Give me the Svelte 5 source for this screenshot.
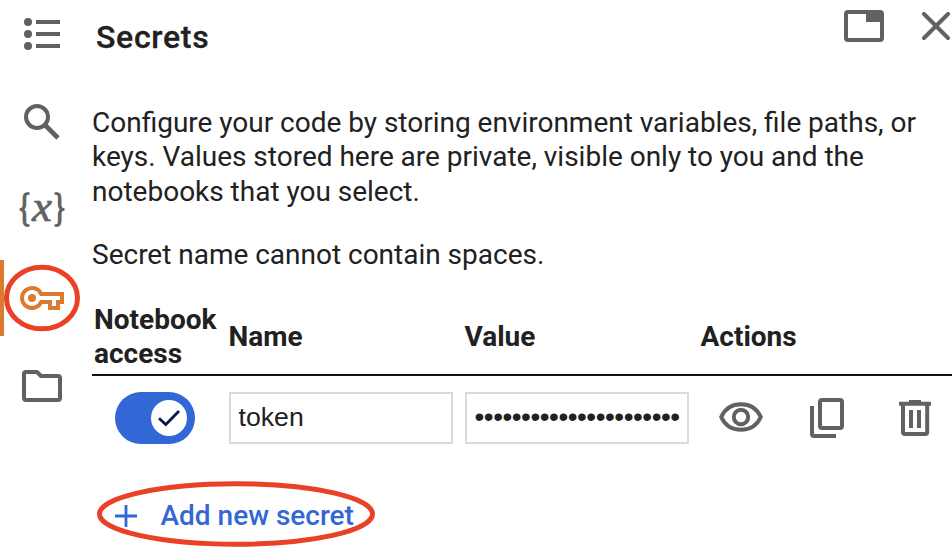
<script>
  let enabled = $state(true);
  const secretLength = 22;
</script>

<div class="panel">
  <nav class="rail">
    <svg viewBox="0 0 44 44" fill="#616161">
      <circle cx="8" cy="10" r="4" /><circle cx="8" cy="22" r="4" /><circle cx="8" cy="34" r="4" />
      <path d="M16 8h24v4H16zM16 20h24v4H16zM16 32h24v4H16z" />
    </svg>
    <svg viewBox="0 0 44 44" fill="none" stroke="#616161">
      <circle cx="17" cy="17" r="11" stroke-width="4" />
      <path d="M25 25l13 13" stroke-width="4.6" />
    </svg>
    <span class="vars"><span class="brace">{'{'}</span><i>x</i><span class="brace">{'}'}</span></span>
    <div class="active">
      <svg viewBox="0 0 44 44" fill="none" stroke="#dc7a30" stroke-width="4">
        <path d="M21.2 18A10 10 0 1 0 21.2 26H30V32H38V26H42V18Z" />
        <circle cx="12" cy="22" r="4" fill="#dc7a30" stroke="none" />
      </svg>
      <svg class="mark key-mark" viewBox="0 0 76 68"><ellipse cx="38" cy="34" rx="35.5" ry="30.8" /></svg>
    </div>
    <svg viewBox="0 0 44 44" fill="none" stroke="#616161" stroke-width="4" stroke-linejoin="round">
      <path d="M4 10Q4 8 6 8H17L21 12H38Q40 12 40 14V34Q40 36 38 36H6Q4 36 4 34Z" />
    </svg>
  </nav>

  <main>
    <header>
      <h1>Secrets</h1>
      <div class="window-actions">
        <svg width="40" height="32" viewBox="0 0 40 32">
          <rect x="2" y="2" width="36" height="28" rx="2" fill="none" stroke="#616161" stroke-width="4" />
          <path d="M22 2h16v10H22z" fill="#616161" />
        </svg>
        <svg width="28" height="28" viewBox="0 0 28 28"><path d="M2 2L26 26M26 2L2 26" stroke="#616161" stroke-width="4" stroke-linecap="round" /></svg>
      </div>
    </header>

    <p class="intro">Configure your code by storing environment variables, file paths, or<br />keys. Values stored here are private, visible only to you and the<br />notebooks that you select.</p>
    <p class="note">Secret name cannot contain spaces.</p>

    <div class="grid head">
      <b class="access">Notebook<br />access</b><b>Name</b><b>Value</b><b>Actions</b>
    </div>
    <div class="grid row">
      <button class="toggle" class:off={!enabled} aria-label="Notebook access" onclick={() => (enabled = !enabled)}>
        <span class="knob">
          <svg width="36" height="36" viewBox="0 0 36 36" fill="none" stroke="#07194a" stroke-width="2.8"><path d="M8 18.2L14.8 24.6L28 11" /></svg>
        </span>
      </button>
      <div class="field">token</div>
      <div class="field dots">{'•'.repeat(secretLength)}</div>
      <div class="actions">
        <svg width="44" height="44" viewBox="0 0 44 44" fill="none" stroke="#616161" stroke-width="4">
          <path d="M2.2 21C6 12.5 13.2 8.2 22 8.2S38 12.5 41.8 21C38 29.5 30.8 33.8 22 33.8S6 29.5 2.2 21Z" />
          <ellipse cx="22" cy="21" rx="7.2" ry="7.2" />
        </svg>
        <svg width="44" height="44" viewBox="0 0 44 44" fill="none" stroke="#616161" stroke-width="4">
          <rect x="14" y="4" width="22" height="28" rx="2" /><path d="M6 10V38Q6 40 8 40H30" />
        </svg>
        <svg width="44" height="44" viewBox="0 0 44 44" fill="none" stroke="#616161" stroke-width="4">
          <path d="M6 7.8H38M16 6H28" /><path d="M10 8V36Q10 38 12 38H32.2Q34.2 38 34.2 36V8M18 14V32M26 14V32" />
        </svg>
      </div>
    </div>

    <button class="add">
      <svg width="22" height="22" viewBox="0 0 22 22" stroke="#3367d6" stroke-width="2.8"><path d="M0 11H22M11 0V22" /></svg>
      <span>Add new secret</span>
      <svg class="mark add-mark" viewBox="0 0 280 66"><ellipse cx="140" cy="33" rx="136.5" ry="30.2" /></svg>
    </button>
  </main>
</div>

<style>
  :global(body) { background: #fff; overflow: hidden; }
  .panel { width: 952px; height: 550px; display: flex; overflow: hidden; font: 28px/34.5px Roboto, "Liberation Sans", sans-serif; color: #212121; }
  svg { display: block; flex: none; }
  .rail { width: 92px; box-sizing: border-box; padding: 12px 8px 0 0; display: flex; flex-direction: column; align-items: center; gap: 44px; }
  .rail > svg, .active > svg:first-child { width: 44px; height: 44px; }
  .vars { height: 44px; width: 48px; display: flex; justify-content: center; align-items: center; font: 400 42px/44px "Liberation Serif", serif; color: #616161; }
  .vars i { font-size: 45px; transform: translateY(-4px); -webkit-text-stroke: 0.7px #616161; }
  .brace { font-size: 40px; margin: 0 -2.5px; -webkit-text-stroke: 1.5px #616161; transform: translateY(-2px) scaleX(0.73); }
  .active { position: relative; width: 84px; height: 44px; margin-right: -8px; align-self: flex-start; display: flex; justify-content: center; }
  .active::before { content: ""; position: absolute; left: 0; top: -16px; width: 4px; height: 76px; background: #dc7a30; }
  .mark { position: absolute; fill: none; stroke: #ea4126; stroke-width: 5; pointer-events: none; }
  .key-mark { left: 3.5px; top: -11.6px; width: 76px; height: 68px; }
  main { width: 860px; }
  header { height: 105.6px; display: flex; justify-content: space-between; align-items: flex-start; }
  h1 { margin: 20px 0 0 4px; font-size: 32px; line-height: 34px; font-weight: 500; letter-spacing: 0.7px; -webkit-text-stroke: 0.3px #212121; }
  .window-actions { display: flex; gap: 38px; padding: 10px 2px 0 0; }
  .window-actions svg:last-child { margin-top: 2px; }
  p { margin: 0; white-space: nowrap; word-spacing: -0.08px; }
  .note { margin-top: 28.9px; }
  .grid { display: grid; grid-template-columns: 137px 236px 236px 1fr; align-items: center; }
  .head { height: 74px; margin-top: 26.5px; padding-bottom: 1px; border-bottom: 2px solid #111; box-sizing: content-box; }
  .head b { font-weight: 700; white-space: nowrap; margin-left: -0.5px; padding-top: 2px; }
  .head b.access { padding: 2px 0 0 2px; line-height: 34px; margin-left: 0; }
  .row { height: 52px; margin-top: 16px; }
  button { border: 0; padding: 0; background: none; font: inherit; cursor: pointer; }
  .toggle { width: 80px; height: 52px; margin-left: 23px; border-radius: 26px; background: #3367d6; display: flex; align-items: center; justify-content: flex-end; padding-right: 8px; }
  .toggle.off { background: #9aa0a6; justify-content: flex-start; padding-left: 8px; }
  .knob { width: 36px; height: 36px; border-radius: 50%; background: white; }
  .field { width: 224px; height: 52px; box-sizing: border-box; border: 2px solid #dadada; padding: 0 8px 0 7.5px; font-size: 26.67px; line-height: 47px; font-family: "Liberation Sans", Arial, sans-serif; white-space: nowrap; overflow: hidden; }
  .dots { font-size: 28px; line-height: 45px; letter-spacing: -0.48px; }
  .actions { display: flex; gap: 43px; padding-left: 17.5px; }
  .add { position: relative; display: flex; align-items: center; gap: 24px; margin: 54px 0 0 22.5px; color: #3367d6; font-weight: 500; line-height: 36px; }
  .add-mark { left: -18.5px; top: -17px; width: 280px; height: 66px; }
</style>
